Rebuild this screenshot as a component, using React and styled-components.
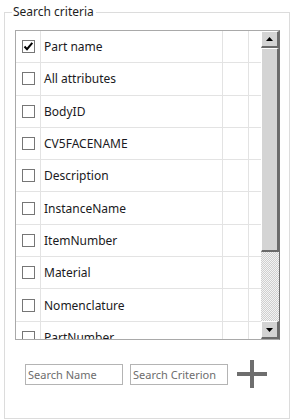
import React from 'react'
import styled, { createGlobalStyle } from 'styled-components'

const GlobalStyle = createGlobalStyle`
  body {
    margin: 0;
    background: #ffffff;
    font-family: 'Noto Sans', 'Liberation Sans', sans-serif;
  }
`

const criteria = [
  { name: 'Part name', checked: true },
  { name: 'All attributes' },
  { name: 'BodyID' },
  { name: 'CV5FACENAME' },
  { name: 'Description' },
  { name: 'InstanceName' },
  { name: 'ItemNumber' },
  { name: 'Material' },
  { name: 'Nomenclature' },
  { name: 'PartNumber' }
]

const Page = styled.div`
  width: 294px;
  height: 420px;
  padding: 4px 5px 0 4px;
  box-sizing: border-box;
`

const GroupBox = styled.fieldset`
  margin: 0;
  padding: 10px 9px 28px 10px;
  height: 415px;
  box-sizing: border-box;
  border: 1px solid #dcdcdc;
  display: flex;
  flex-direction: column;
`

const Legend = styled.legend`
  font-size: 12px;
  line-height: 16px;
  color: #1e1e1e;
  padding: 0 2px 0 1px;
  margin-left: -3px;
`

const Grid = styled.div`
  display: flex;
  height: 310px;
  border: 1px solid #a9a9a9;
  border-right: 1px solid #6e6e6e;
  box-sizing: border-box;
  width: 265px;
`

const List = styled.div`
  flex: 1;
  overflow: hidden;
  display: flex;
  flex-direction: column;
`

const Row = styled.div`
  display: grid;
  grid-template-columns: 25px 182px 26px 1fr;
  flex: 0 0 32.3px;
  box-sizing: border-box;
  border-bottom: 1px solid #e3e3e3;
`

const Cell = styled.div`
  display: flex;
  align-items: center;
  border-right: ${({ last }) => (last ? 'none' : '1px solid #e3e3e3')};
  font-size: 12px;
  color: #1a1a22;
  padding-left: ${({ text }) => (text ? '3px' : '0')};
  justify-content: ${({ center }) => (center ? 'center' : 'flex-start')};
`

const Box = styled.div`
  width: 13px;
  height: 13px;
  box-sizing: border-box;
  border: 1px solid #767676;
  background: #ffffff;
  display: flex;
  align-items: center;
  justify-content: center;
`

const ScrollBar = styled.div`
  width: 18px;
  display: flex;
  flex-direction: column;
  background: repeating-conic-gradient(#cfcfcf 0 25%, #f4f4f4 0 50%) 0 0 / 2px 2px;
`

const ScrollPart = styled.div`
  height: ${({ h }) => `${h}px`};
  flex: none;
  box-sizing: border-box;
  background: #d4d4d4;
  border-top: 1px solid #ffffff;
  border-left: 1px solid #ffffff;
  border-right: 2px solid #6b6b6b;
  border-bottom: 2px solid #6b6b6b;
  display: flex;
  align-items: center;
  justify-content: center;
`

const Track = styled.div`
  flex: 1;
`

const Controls = styled.div`
  display: flex;
  align-items: center;
  gap: 7px;
  margin-top: 20px;
  padding-left: 10px;
`

const Field = styled.input`
  width: 98px;
  height: 21px;
  box-sizing: border-box;
  border: 1px solid #b4b4b4;
  padding: 0 2px;
  font-family: 'Noto Sans', 'Liberation Sans', sans-serif;
  font-size: 11px;
  color: #333;
  outline: none;

  &::placeholder {
    color: #6d6d6d;
  }
`

const AddButton = styled.button`
  border: none;
  background: none;
  padding: 0;
  margin-left: 2px;
  width: 30px;
  height: 28px;
  display: flex;
  align-items: center;
  justify-content: center;
`

const Check = () => (
  <svg width="11" height="11" viewBox="0 0 11 11">
    <path d="M1.5 5.5 L4 8.2 L9.3 1.8" fill="none" stroke="#000" strokeWidth="2" />
  </svg>
)

const Arrow = ({ down }) => (
  <svg width="7" height="4" viewBox="0 0 7 4">
    <path d={down ? 'M0 0 H7 L3.5 4 Z' : 'M0 4 H7 L3.5 0 Z'} fill="#000" />
  </svg>
)

const Plus = () => (
  <svg width="30" height="28" viewBox="0 0 30 28">
    <path d="M15 0 V28 M0 14 H30" stroke="#6e6e6e" strokeWidth="4" />
  </svg>
)

export default function App() {
  return (
    <Page>
      <GlobalStyle />
      <GroupBox>
        <Legend>Search criteria</Legend>
        <Grid>
          <List>
            {criteria.map(c => (
              <Row key={c.name}>
                <Cell center>
                  <Box>{c.checked && <Check />}</Box>
                </Cell>
                <Cell text>{c.name}</Cell>
                <Cell />
                <Cell last />
              </Row>
            ))}
          </List>
          <ScrollBar>
            <ScrollPart h={17}>
              <Arrow />
            </ScrollPart>
            <ScrollPart h={204} />
            <Track />
            <ScrollPart h={18}>
              <Arrow down />
            </ScrollPart>
          </ScrollBar>
        </Grid>
        <Controls>
          <Field placeholder="Search Name" />
          <Field placeholder="Search Criterion" />
          <AddButton>
            <Plus />
          </AddButton>
        </Controls>
      </GroupBox>
    </Page>
  )
}
